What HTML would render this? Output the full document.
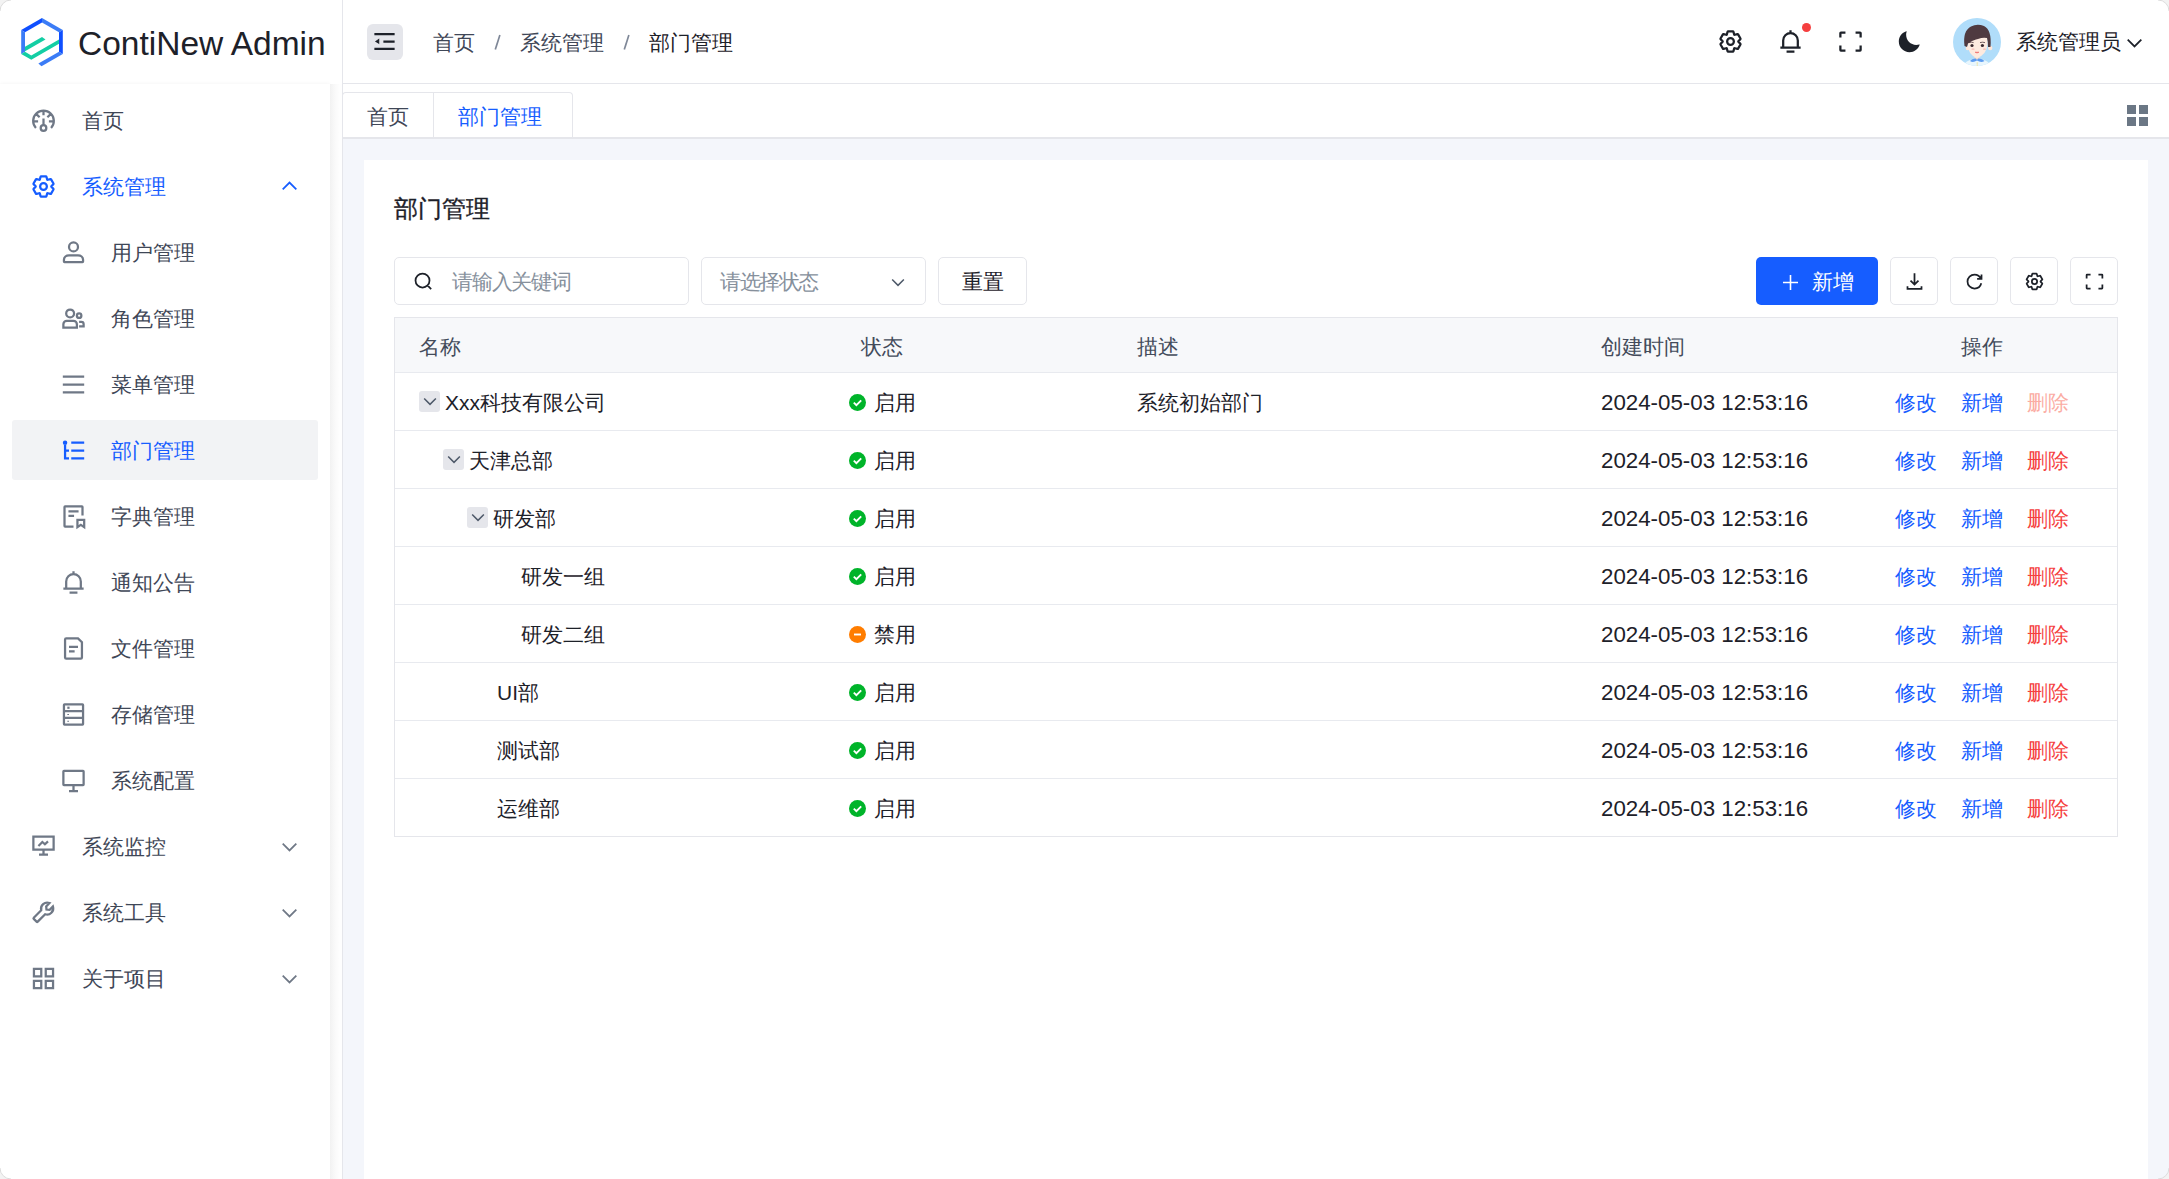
<!DOCTYPE html>
<html><head><meta charset="utf-8">
<style>
*{box-sizing:border-box;margin:0;padding:0}
html,body{width:2169px;height:1179px;overflow:hidden;background:#fff}
body{position:relative;font-family:"Liberation Sans",sans-serif;font-size:21px;color:#1d2129}
.a{position:absolute}
.t{position:absolute;white-space:nowrap;line-height:21px}
svg.i{position:absolute;fill:none;stroke:currentColor;stroke-width:4;stroke-linecap:butt;stroke-linejoin:miter}
/* header */
#hdr{left:0;top:0;width:2169px;height:84px;background:#fff}
#hline{left:342px;top:83px;width:1827px;height:1px;background:#e5e6eb}
#side{left:0;top:84px;width:330px;height:1095px;background:#fff;box-shadow:0 -1px 3px rgba(0,0,0,0.03)}
#shadow{left:330px;top:84px;width:12px;height:1095px;background:linear-gradient(90deg,#f2f2f2,#fafafa 45%,#fefefe 80%)}
#vline{left:342px;top:0;width:1px;height:1179px;background:#e5e6eb}
#main{left:343px;top:139px;width:1826px;height:1040px;background:#f4f6fb}
#tabs{left:343px;top:84px;width:1826px;height:55px;background:#fff;border-bottom:2px solid #e5e6eb}
#card{left:364px;top:160px;width:1784px;height:1019px;background:#fff}
.menu .t{color:#4e5969}
</style></head><body>
<div class="a" id="hdr"></div>
<div class="a" id="hline"></div>
<div class="a" id="side"></div>
<div class="a" id="shadow"></div>
<div class="a" id="vline"></div>
<div class="a" id="tabs"></div>
<div class="a" id="main"></div>
<div class="a" id="card"></div>

<!-- logo -->
<svg class="a" style="left:0;top:0" width="90" height="84" viewBox="0 0 90 84">
<polygon points="21.2,30.1 42,18.1 42,22.5 25,32.3" fill="#0f4fff"/>
<polygon points="42,18.1 62.8,30.1 59,32.3 42,22.5" fill="#3b7cf6"/>
<polygon points="62.8,30.1 62.8,53.9 59,51.7 59,32.3" fill="#0f4fff"/>
<polygon points="62.8,53.9 41.5,66.2 38.4,63.6 59,51.7" fill="#3b7cf6"/>
<polygon points="21.2,30.1 25,32.3 25,51.7 21.2,53.9" fill="#3b7cf6"/>
<polygon points="21.2,53.9 31.3,59.8 59,43.8 59,39.4 31.3,55.4 25,51.7" fill="#13cea4"/>
<polygon points="25,51.2 45.5,39.4 42,37.1 25,46.8" fill="#13cea4"/>
</svg>
<div class="t" id="logotxt" style="left:78px;top:24px;font-size:33.5px;line-height:40px;color:#1d2129">ContiNew Admin</div>
<!-- toggle -->
<div class="a" style="left:367px;top:24px;width:36px;height:36px;border-radius:6px;background:#e5e6eb"></div>
<svg class="i" style="left:371px;top:28px;color:#1d2129" width="27" height="27" viewBox="0 0 48 48" stroke-width="3.2" stroke-linecap="round"><path d="M42 11H6M42 24H22M42 37H6"/><path d="M13.66 26.912l-4.82-3.118 4.82-3.118v6.236Z" fill="currentColor" stroke-width="2"/></svg>
<!-- breadcrumb -->
<div class="t" style="left:433px;top:32px;color:#3f4757">首页</div>
<svg class="a" style="left:490px;top:30px" width="16" height="24"><path d="M5.3 19.6 L9.9 5" stroke="#7f8898" stroke-width="1.7" fill="none"/></svg>
<div class="t" style="left:520px;top:32px;color:#3f4757">系统管理</div>
<svg class="a" style="left:619px;top:30px" width="16" height="24"><path d="M5.3 19.6 L9.9 5" stroke="#7f8898" stroke-width="1.7" fill="none"/></svg>
<div class="t" style="left:649px;top:32px;color:#1d2129">部门管理</div>
<!-- right icons -->
<svg class="i" style="left:1717px;top:28px;color:#1d2129" width="27" height="27" viewBox="0 0 48 48"><path d="M18.797 6.732A1 1 0 0 1 19.76 6h8.48a1 1 0 0 1 .964.732l1.285 4.628a1 1 0 0 0 1.213.7l4.651-1.2a1 1 0 0 1 1.116.468l4.24 7.344a1 1 0 0 1-.153 1.2L38.193 23.3a1 1 0 0 0 0 1.402l3.364 3.427a1 1 0 0 1 .153 1.2l-4.24 7.344a1 1 0 0 1-1.116.468l-4.65-1.2a1 1 0 0 0-1.214.7l-1.285 4.628a1 1 0 0 1-.964.732h-8.48a1 1 0 0 1-.963-.732L17.51 36.64a1 1 0 0 0-1.213-.7l-4.65 1.2a1 1 0 0 1-1.116-.468l-4.24-7.344a1 1 0 0 1 .153-1.2L9.809 24.7a1 1 0 0 0 0-1.402l-3.364-3.427a1 1 0 0 1-.153-1.2l4.24-7.344a1 1 0 0 1 1.116-.468l4.65 1.2a1 1 0 0 0 1.213-.7l1.286-4.628Z"/><path d="M30 24a6 6 0 1 1-12 0 6 6 0 0 1 12 0Z"/></svg>
<svg class="i" style="left:1777px;top:28px;color:#1d2129" width="27" height="27" viewBox="0 0 48 48"><path d="M24 9c7.18 0 13 5.82 13 13v13H11V22c0-7.18 5.82-13 13-13Zm0 0V4M6 35h36m-25 7h14"/></svg>
<div class="a" style="left:1802px;top:23px;width:9px;height:9px;border-radius:50%;background:#f53f3f"></div>
<svg class="i" style="left:1837px;top:28px;color:#1d2129" width="27" height="27" viewBox="0 0 48 48"><path d="M42 17V9a1 1 0 0 0-1-1h-8M6 17V9a1 1 0 0 1 1-1h8m27 23v8a1 1 0 0 1-1 1h-8M6 31v8a1 1 0 0 0 1 1h8"/></svg>
<svg class="a" style="left:1896px;top:28px" width="27" height="27" viewBox="0 0 48 48"><path fill="#1d2129" d="M42.108 29.769c.124-.387-.258-.736-.645-.613A17.99 17.99 0 0 1 36 30c-9.941 0-18-8.059-18-18 0-1.904.296-3.74.844-5.463.123-.387-.226-.768-.613-.645C10.558 8.334 5 15.518 5 24c0 10.493 8.507 19 19 19 8.482 0 15.666-5.558 18.108-13.231Z"/></svg>
<!-- avatar -->
<svg class="a" style="left:1953px;top:18px" width="48" height="48" viewBox="0 0 48 48">
<defs><clipPath id="avc"><circle cx="24" cy="24" r="24"/></clipPath></defs>
<g clip-path="url(#avc)">
<rect width="48" height="48" fill="#b0ddfa"/>
<path d="M10 48 Q12 43 20 41 L28 41 Q36 43 38 48Z" fill="#e9f6fd"/>
<rect x="21.5" y="36" width="5" height="6" fill="#fde0cc"/>
<path d="M17 43 Q19 40 23 40.5 L24 42 L25 40.5 Q29 40 31.5 43 Q28 45 24 42.5 Q20 45 17 43Z" fill="#5d9cf0"/>
<circle cx="14.8" cy="30" r="2.2" fill="#fde8dc"/><circle cx="37.2" cy="30" r="2.2" fill="#fde8dc"/>
<path d="M14.8 18 L34.6 18 L34.6 26 Q33.5 37 24 40 Q14.8 37 14.8 26 Z" fill="#fdeadf"/>
<path d="M11.5 28 Q9.5 13 18 8.5 Q24 5.5 31 8 Q39 12 37.5 29 L35 29 Q35 23 34 20 Q30 19 25 21 L23 21.5 Q19 22.5 15 25.5 L14 29 Z" fill="#4f3a40"/>
<path d="M16 24.6 Q18.5 23.8 20.6 24.6M27 24.6 Q29.5 23.8 32 24.6" stroke="#4f3a40" stroke-width="0.8" fill="none"/>
<circle cx="19" cy="27.5" r="1.6" fill="#3a2a30"/><circle cx="29.4" cy="27.5" r="1.6" fill="#3a2a30"/>
<ellipse cx="20" cy="31.2" rx="1.6" ry="0.9" fill="#f8c6c0"/><ellipse cx="31.5" cy="31.2" rx="1.6" ry="0.9" fill="#f8c6c0"/>
<path d="M22 34.2 Q24 35.8 26 34.2 Z" fill="#ef6b6b" stroke="#ef6b6b" stroke-width="0.6"/>
<circle cx="24.2" cy="45" r="0.6" fill="#f2d34a"/><circle cx="24.2" cy="47" r="0.6" fill="#f2d34a"/>
</g></svg>
<div class="t" style="left:2016px;top:31px;color:#1d2129">系统管理员</div>
<svg class="i" style="left:2124px;top:32px;color:#1d2129" width="21" height="21" viewBox="0 0 48 48"><path d="M39.6 17.443 24.043 33 8.487 17.443"/></svg>

<div class="a" style="left:12px;top:420px;width:306px;height:60px;border-radius:3px;background:#f2f3f5"></div>
<svg class="i" style="left:30px;top:106.5px;color:#6f7886;" width="27" height="27" viewBox="0 0 48 48" stroke-width="2.5"><path d="M10.5 37.2A18.4 18.4 0 1 1 37.5 37.2M24 6.4v8.4M10.8 12.3l6.3 6M37.2 12.3l-6.3 6M5.8 25.5h8.6M42.2 25.5h-8.6M24 20.5V32"/><circle cx="24" cy="37.3" r="5"/></svg>
<div class="t" style="left:82px;top:109.5px;color:#3f4757">首页</div>
<svg class="i" style="left:30px;top:172.5px;color:#165dff;" width="27" height="27" viewBox="0 0 48 48" stroke-width="2.5"><path d="M18.797 6.732A1 1 0 0 1 19.76 6h8.48a1 1 0 0 1 .964.732l1.285 4.628a1 1 0 0 0 1.213.7l4.651-1.2a1 1 0 0 1 1.116.468l4.24 7.344a1 1 0 0 1-.153 1.2L38.193 23.3a1 1 0 0 0 0 1.402l3.364 3.427a1 1 0 0 1 .153 1.2l-4.24 7.344a1 1 0 0 1-1.116.468l-4.65-1.2a1 1 0 0 0-1.214.7l-1.285 4.628a1 1 0 0 1-.964.732h-8.48a1 1 0 0 1-.963-.732L17.51 36.64a1 1 0 0 0-1.213-.7l-4.65 1.2a1 1 0 0 1-1.116-.468l-4.24-7.344a1 1 0 0 1 .153-1.2L9.809 24.7a1 1 0 0 0 0-1.402l-3.364-3.427a1 1 0 0 1-.153-1.2l4.24-7.344a1 1 0 0 1 1.116-.468l4.65 1.2a1 1 0 0 0 1.213-.7l1.286-4.628Z"/><path d="M30 24a6 6 0 1 1-12 0 6 6 0 0 1 12 0Z"/></svg>
<div class="t" style="left:82px;top:175.5px;color:#165dff">系统管理</div>
<svg class="i" style="left:279px;top:175.5px;color:#165dff;" width="21" height="21" viewBox="0 0 48 48" stroke-width="2.5"><path d="M39.6 30.557 24.043 15 8.487 30.557"/></svg>
<svg class="i" style="left:60px;top:238.5px;color:#6f7886;" width="27" height="27" viewBox="0 0 48 48" stroke-width="2.5"><path d="M7 37c0-4.97 4.03-8 9-8h16c4.97 0 9 3.03 9 8v3a1 1 0 0 1-1 1H8a1 1 0 0 1-1-1v-3Z"/><circle cx="24" cy="14" r="8"/></svg>
<div class="t" style="left:111px;top:241.5px;color:#3f4757">用户管理</div>
<svg class="i" style="left:60px;top:304.5px;color:#6f7886;" width="27" height="27" viewBox="0 0 48 48" stroke-width="2.5"><circle cx="18" cy="15" r="7"/><circle cx="34" cy="19" r="4"/><path d="M6 34a6 6 0 0 1 6-6h12a6 6 0 0 1 6 6v6H6v-6ZM34 30h4a4 4 0 0 1 4 4v4h-8"/></svg>
<div class="t" style="left:111px;top:307.5px;color:#3f4757">角色管理</div>
<svg class="i" style="left:60px;top:370.5px;color:#6f7886;" width="27" height="27" viewBox="0 0 48 48" stroke-width="2.5"><path d="M5 10h38M5 24h38M5 38h38"/></svg>
<div class="t" style="left:111px;top:373.5px;color:#3f4757">菜单管理</div>
<svg class="i" style="left:60px;top:436.5px;color:#165dff;" width="27" height="27" viewBox="0 0 48 48" stroke-width="2.5"><path d="M20 10h23M20 24h23M20 38h23M9 12v28m0-28a2 2 0 1 0 0-4 2 2 0 0 0 0 4Zm0 26h7M9 24h7"/></svg>
<div class="t" style="left:111px;top:439.5px;color:#165dff">部门管理</div>
<svg class="i" style="left:60px;top:502.5px;color:#6f7886;" width="27" height="27" viewBox="0 0 48 48" stroke-width="2.5"><path d="M40 22V7a1 1 0 0 0-1-1H9a1 1 0 0 0-1 1v34a1 1 0 0 0 1 1h15M15 15h18M15 23h10"/><path d="M31 30h12v13l-6-4-6 4V30Z"/></svg>
<div class="t" style="left:111px;top:505.5px;color:#3f4757">字典管理</div>
<svg class="i" style="left:60px;top:568.5px;color:#6f7886;" width="27" height="27" viewBox="0 0 48 48" stroke-width="2.5"><path d="M24 9c7.18 0 13 5.82 13 13v13H11V22c0-7.18 5.82-13 13-13Zm0 0V4M6 35h36m-25 7h14"/></svg>
<div class="t" style="left:111px;top:571.5px;color:#3f4757">通知公告</div>
<svg class="i" style="left:60px;top:634.5px;color:#6f7886;" width="27" height="27" viewBox="0 0 48 48" stroke-width="2.5"><path d="M16 21h16m-16 8h10m11 13H11a2 2 0 0 1-2-2V8a2 2 0 0 1 2-2h21l7 7v27a2 2 0 0 1-2 2Z"/></svg>
<div class="t" style="left:111px;top:637.5px;color:#3f4757">文件管理</div>
<svg class="i" style="left:60px;top:700.5px;color:#6f7886;" width="27" height="27" viewBox="0 0 48 48" stroke-width="2.5"><path d="M7 18h34v12H7V18ZM40 6H8a1 1 0 0 0-1 1v11h34V7a1 1 0 0 0-1-1ZM7 30h34v11a1 1 0 0 1-1 1H8a1 1 0 0 1-1-1V30Z"/><path d="M13 10h4v4h-4z" fill="currentColor" stroke="none"/><path d="M13 23h3v2h-3zM13 35h3v2h-3z" fill="currentColor" stroke="none"/></svg>
<div class="t" style="left:111px;top:703.5px;color:#3f4757">存储管理</div>
<svg class="i" style="left:60px;top:766.5px;color:#6f7886;" width="27" height="27" viewBox="0 0 48 48" stroke-width="2.5"><path d="M24 32v11m-8 0h16M7 7h34a1 1 0 0 1 1 1v23a1 1 0 0 1-1 1H7a1 1 0 0 1-1-1V8a1 1 0 0 1 1-1Z"/></svg>
<div class="t" style="left:111px;top:769.5px;color:#3f4757">系统配置</div>
<svg class="i" style="left:30px;top:832.5px;color:#6f7886;" width="27" height="27" viewBox="0 0 48 48" stroke-width="2.5"><path d="M42 6.5H6v23h36V6.5Z"/><path d="M24 29.5v9M16 38.5h16"/><path d="m15 23 7-7 4.5 4 5.5-5"/></svg>
<div class="t" style="left:82px;top:835.5px;color:#3f4757">系统监控</div>
<svg class="i" style="left:279px;top:835.5px;color:#6f7886;" width="21" height="21" viewBox="0 0 48 48" stroke-width="2.5"><path d="M39.6 17.443 24.043 33 8.487 17.443"/></svg>
<svg class="i" style="left:30px;top:898.5px;color:#6f7886;" width="27" height="27" viewBox="0 0 48 48" stroke-width="2.5"><path d="M19.94 20.04 6.7 33.26a1.5 1.5 0 0 0 0 2.12l4.92 4.92a1.5 1.5 0 0 0 2.12 0L26.96 27.06a11 11 0 0 0 13.86-13.77l-5.9 5.9-5.66-.47-.47-5.66 5.9-5.9a11 11 0 0 0-14.75 12.88Z"/></svg>
<div class="t" style="left:82px;top:901.5px;color:#3f4757">系统工具</div>
<svg class="i" style="left:279px;top:901.5px;color:#6f7886;" width="21" height="21" viewBox="0 0 48 48" stroke-width="2.5"><path d="M39.6 17.443 24.043 33 8.487 17.443"/></svg>
<svg class="i" style="left:30px;top:964.5px;color:#6f7886;" width="27" height="27" viewBox="0 0 48 48" stroke-width="2.5"><path d="M7 7h13v13H7zM28 7h13v13H28zM7 28h13v13H7zM28 28h13v13H28z"/></svg>
<div class="t" style="left:82px;top:967.5px;color:#3f4757">关于项目</div>
<svg class="i" style="left:279px;top:967.5px;color:#6f7886;" width="21" height="21" viewBox="0 0 48 48" stroke-width="2.5"><path d="M39.6 17.443 24.043 33 8.487 17.443"/></svg>
<div class="a" style="left:342px;top:92px;width:231px;height:47px;border:1px solid #e5e6eb;border-bottom:none;border-radius:4px 4px 0 0;background:#fff"></div>
<div class="a" style="left:433px;top:93px;width:1px;height:44px;background:#e5e6eb"></div>
<div class="a" style="left:343px;top:137px;width:1826px;height:2px;background:#e5e6eb"></div>
<div class="t" style="left:367px;top:106px;color:#3f4757">首页</div>
<div class="t" style="left:458px;top:106px;color:#165dff">部门管理</div>
<div class="a" style="left:2127px;top:105px;width:9px;height:9px;background:#6b7785"></div>
<div class="a" style="left:2139px;top:105px;width:9px;height:9px;background:#6b7785"></div>
<div class="a" style="left:2127px;top:117px;width:9px;height:9px;background:#6b7785"></div>
<div class="a" style="left:2139px;top:117px;width:9px;height:9px;background:#6b7785"></div>
<div class="t" style="left:394px;top:197px;font-size:24px;line-height:24px;color:#1d2129;-webkit-text-stroke:0.35px #1d2129">部门管理</div>
<div class="a" style="left:394px;top:257px;width:295px;height:48px;border:1px solid #e5e6eb;border-radius:5px;background:#fff"></div>
<svg class="i" style="left:413px;top:271px;color:#1d2129" width="21" height="21" viewBox="0 0 48 48" stroke-width="3.6"><path d="M33.072 33.071c6.248-6.248 6.248-16.379 0-22.627-6.249-6.249-16.38-6.249-22.628 0-6.248 6.248-6.248 16.379 0 22.627 6.248 6.248 16.38 6.248 22.628 0Zm0 0 8.485 8.485"/></svg>
<div class="t" style="left:452px;top:271px;color:#86909c;letter-spacing:-1.2px">请输入关键词</div>
<div class="a" style="left:701px;top:257px;width:225px;height:48px;border:1px solid #e5e6eb;border-radius:5px;background:#fff"></div>
<div class="t" style="left:720px;top:271px;color:#86909c;letter-spacing:-1.5px">请选择状态</div>
<svg class="i" style="left:889px;top:273px;color:#4e5969;" width="18" height="18" viewBox="0 0 48 48" stroke-width="4"><path d="M39.6 17.443 24.043 33 8.487 17.443"/></svg>
<div class="a" style="left:938px;top:257px;width:89px;height:48px;border:1px solid #e5e6eb;border-radius:5px;background:#fff"></div>
<div class="t" style="left:962px;top:271px;color:#1d2129">重置</div>
<div class="a" style="left:1756px;top:257px;width:122px;height:48px;border-radius:5px;background:#165dff"></div>
<svg class="i" style="left:1781px;top:273px;color:#fff" width="19" height="19" viewBox="0 0 48 48" stroke-width="4.5"><path d="M5 24h38M24 5v38"/></svg>
<div class="t" style="left:1812px;top:271px;color:#fff">新增</div>
<div class="a" style="left:1890px;top:257px;width:48px;height:48px;border:1px solid #e5e6eb;border-radius:5px;background:#fff"></div>
<svg class="i" style="left:1903.5px;top:270.5px;color:#1d2129" width="21" height="21" viewBox="0 0 48 48" stroke-width="4"><path d="m33.072 22.071-9.07 9.071-9.072-9.07M24 5v26m16 4v6H8v-6"/></svg>
<div class="a" style="left:1950px;top:257px;width:48px;height:48px;border:1px solid #e5e6eb;border-radius:5px;background:#fff"></div>
<svg class="i" style="left:1963.5px;top:270.5px;color:#1d2129" width="21" height="21" viewBox="0 0 48 48" stroke-width="4"><path d="M38.837 18C36.463 12.136 30.715 8 24 8 15.163 8 8 15.163 8 24s7.163 16 16 16c7.455 0 13.72-5.1 15.496-12M40 8v10H30"/></svg>
<div class="a" style="left:2010px;top:257px;width:48px;height:48px;border:1px solid #e5e6eb;border-radius:5px;background:#fff"></div>
<svg class="i" style="left:2023.5px;top:270.5px;color:#1d2129" width="21" height="21" viewBox="0 0 48 48" stroke-width="4"><path d="M18.797 6.732A1 1 0 0 1 19.76 6h8.48a1 1 0 0 1 .964.732l1.285 4.628a1 1 0 0 0 1.213.7l4.651-1.2a1 1 0 0 1 1.116.468l4.24 7.344a1 1 0 0 1-.153 1.2L38.193 23.3a1 1 0 0 0 0 1.402l3.364 3.427a1 1 0 0 1 .153 1.2l-4.24 7.344a1 1 0 0 1-1.116.468l-4.65-1.2a1 1 0 0 0-1.214.7l-1.285 4.628a1 1 0 0 1-.964.732h-8.48a1 1 0 0 1-.963-.732L17.51 36.64a1 1 0 0 0-1.213-.7l-4.65 1.2a1 1 0 0 1-1.116-.468l-4.24-7.344a1 1 0 0 1 .153-1.2L9.809 24.7a1 1 0 0 0 0-1.402l-3.364-3.427a1 1 0 0 1-.153-1.2l4.24-7.344a1 1 0 0 1 1.116-.468l4.65 1.2a1 1 0 0 0 1.213-.7l1.286-4.628Z"/><path d="M30 24a6 6 0 1 1-12 0 6 6 0 0 1 12 0Z"/></svg>
<div class="a" style="left:2070px;top:257px;width:48px;height:48px;border:1px solid #e5e6eb;border-radius:5px;background:#fff"></div>
<svg class="i" style="left:2083.5px;top:270.5px;color:#1d2129" width="21" height="21" viewBox="0 0 48 48" stroke-width="4"><path d="M42 17V9a1 1 0 0 0-1-1h-8M6 17V9a1 1 0 0 1 1-1h8m27 23v8a1 1 0 0 1-1 1h-8M6 31v8a1 1 0 0 0 1 1h8"/></svg>
<div class="a" style="left:394px;top:317px;width:1724px;height:520px;border:1px solid #e5e6eb;background:#fff"></div>
<div class="a" style="left:395px;top:318px;width:1722px;height:54px;background:#f7f8fa"></div>
<div class="a" style="left:395px;top:372px;width:1722px;height:1px;background:#e8eaef"></div>
<div class="a" style="left:395px;top:430px;width:1722px;height:1px;background:#e8eaef"></div>
<div class="a" style="left:395px;top:488px;width:1722px;height:1px;background:#e8eaef"></div>
<div class="a" style="left:395px;top:546px;width:1722px;height:1px;background:#e8eaef"></div>
<div class="a" style="left:395px;top:604px;width:1722px;height:1px;background:#e8eaef"></div>
<div class="a" style="left:395px;top:662px;width:1722px;height:1px;background:#e8eaef"></div>
<div class="a" style="left:395px;top:720px;width:1722px;height:1px;background:#e8eaef"></div>
<div class="a" style="left:395px;top:778px;width:1722px;height:1px;background:#e8eaef"></div>
<div class="t" style="left:419px;top:336px;color:#434b5a">名称</div>
<div class="t" style="left:861px;top:336px;color:#434b5a">状态</div>
<div class="t" style="left:1137px;top:336px;color:#434b5a">描述</div>
<div class="t" style="left:1601px;top:336px;color:#434b5a">创建时间</div>
<div class="t" style="left:1961px;top:336px;color:#434b5a">操作</div>
<div class="a" style="left:419px;top:391px;width:21px;height:21px;border-radius:3px;background:#e5e6eb"></div>
<svg class="i" style="left:420.5px;top:391.5px;color:#4e5969;" width="18" height="18" viewBox="0 0 48 48" stroke-width="3.6"><path d="M39.6 17.443 24.043 33 8.487 17.443"/></svg>
<div class="t" style="left:445px;top:392px;color:#1d2129">Xxx科技有限公司</div>
<svg class="a" style="left:849px;top:394px" width="17" height="17" viewBox="0 0 17 17"><circle cx="8.5" cy="8.5" r="8.5" fill="#00b42a"/><path d="M4.8 8.6l2.6 2.5 4.8-4.8" stroke="#fff" stroke-width="1.9" fill="none"/></svg>
<div class="t" style="left:874px;top:392px;color:#1d2129">启用</div>
<div class="t" style="left:1137px;top:392px;color:#1d2129">系统初始部门</div>
<div class="t" style="left:1601px;top:392px;font-size:22.3px;color:#1d2129">2024-05-03 12:53:16</div>
<div class="t" style="left:1895px;top:392px;color:#165dff">修改</div>
<div class="t" style="left:1961px;top:392px;color:#165dff">新增</div>
<div class="t" style="left:2027px;top:392px;color:#fbaca3">删除</div>
<div class="a" style="left:443px;top:449px;width:21px;height:21px;border-radius:3px;background:#e5e6eb"></div>
<svg class="i" style="left:444.5px;top:449.5px;color:#4e5969;" width="18" height="18" viewBox="0 0 48 48" stroke-width="3.6"><path d="M39.6 17.443 24.043 33 8.487 17.443"/></svg>
<div class="t" style="left:469px;top:450px;color:#1d2129">天津总部</div>
<svg class="a" style="left:849px;top:452px" width="17" height="17" viewBox="0 0 17 17"><circle cx="8.5" cy="8.5" r="8.5" fill="#00b42a"/><path d="M4.8 8.6l2.6 2.5 4.8-4.8" stroke="#fff" stroke-width="1.9" fill="none"/></svg>
<div class="t" style="left:874px;top:450px;color:#1d2129">启用</div>
<div class="t" style="left:1601px;top:450px;font-size:22.3px;color:#1d2129">2024-05-03 12:53:16</div>
<div class="t" style="left:1895px;top:450px;color:#165dff">修改</div>
<div class="t" style="left:1961px;top:450px;color:#165dff">新增</div>
<div class="t" style="left:2027px;top:450px;color:#f53f3f">删除</div>
<div class="a" style="left:467px;top:507px;width:21px;height:21px;border-radius:3px;background:#e5e6eb"></div>
<svg class="i" style="left:468.5px;top:507.5px;color:#4e5969;" width="18" height="18" viewBox="0 0 48 48" stroke-width="3.6"><path d="M39.6 17.443 24.043 33 8.487 17.443"/></svg>
<div class="t" style="left:493px;top:508px;color:#1d2129">研发部</div>
<svg class="a" style="left:849px;top:510px" width="17" height="17" viewBox="0 0 17 17"><circle cx="8.5" cy="8.5" r="8.5" fill="#00b42a"/><path d="M4.8 8.6l2.6 2.5 4.8-4.8" stroke="#fff" stroke-width="1.9" fill="none"/></svg>
<div class="t" style="left:874px;top:508px;color:#1d2129">启用</div>
<div class="t" style="left:1601px;top:508px;font-size:22.3px;color:#1d2129">2024-05-03 12:53:16</div>
<div class="t" style="left:1895px;top:508px;color:#165dff">修改</div>
<div class="t" style="left:1961px;top:508px;color:#165dff">新增</div>
<div class="t" style="left:2027px;top:508px;color:#f53f3f">删除</div>
<div class="t" style="left:521px;top:566px;color:#1d2129">研发一组</div>
<svg class="a" style="left:849px;top:568px" width="17" height="17" viewBox="0 0 17 17"><circle cx="8.5" cy="8.5" r="8.5" fill="#00b42a"/><path d="M4.8 8.6l2.6 2.5 4.8-4.8" stroke="#fff" stroke-width="1.9" fill="none"/></svg>
<div class="t" style="left:874px;top:566px;color:#1d2129">启用</div>
<div class="t" style="left:1601px;top:566px;font-size:22.3px;color:#1d2129">2024-05-03 12:53:16</div>
<div class="t" style="left:1895px;top:566px;color:#165dff">修改</div>
<div class="t" style="left:1961px;top:566px;color:#165dff">新增</div>
<div class="t" style="left:2027px;top:566px;color:#f53f3f">删除</div>
<div class="t" style="left:521px;top:624px;color:#1d2129">研发二组</div>
<svg class="a" style="left:849px;top:626px" width="17" height="17" viewBox="0 0 17 17"><circle cx="8.5" cy="8.5" r="8.5" fill="#ff7d00"/><path d="M5 8.5h7" stroke="#fff" stroke-width="1.9"/></svg>
<div class="t" style="left:874px;top:624px;color:#1d2129">禁用</div>
<div class="t" style="left:1601px;top:624px;font-size:22.3px;color:#1d2129">2024-05-03 12:53:16</div>
<div class="t" style="left:1895px;top:624px;color:#165dff">修改</div>
<div class="t" style="left:1961px;top:624px;color:#165dff">新增</div>
<div class="t" style="left:2027px;top:624px;color:#f53f3f">删除</div>
<div class="t" style="left:497px;top:682px;color:#1d2129">UI部</div>
<svg class="a" style="left:849px;top:684px" width="17" height="17" viewBox="0 0 17 17"><circle cx="8.5" cy="8.5" r="8.5" fill="#00b42a"/><path d="M4.8 8.6l2.6 2.5 4.8-4.8" stroke="#fff" stroke-width="1.9" fill="none"/></svg>
<div class="t" style="left:874px;top:682px;color:#1d2129">启用</div>
<div class="t" style="left:1601px;top:682px;font-size:22.3px;color:#1d2129">2024-05-03 12:53:16</div>
<div class="t" style="left:1895px;top:682px;color:#165dff">修改</div>
<div class="t" style="left:1961px;top:682px;color:#165dff">新增</div>
<div class="t" style="left:2027px;top:682px;color:#f53f3f">删除</div>
<div class="t" style="left:497px;top:740px;color:#1d2129">测试部</div>
<svg class="a" style="left:849px;top:742px" width="17" height="17" viewBox="0 0 17 17"><circle cx="8.5" cy="8.5" r="8.5" fill="#00b42a"/><path d="M4.8 8.6l2.6 2.5 4.8-4.8" stroke="#fff" stroke-width="1.9" fill="none"/></svg>
<div class="t" style="left:874px;top:740px;color:#1d2129">启用</div>
<div class="t" style="left:1601px;top:740px;font-size:22.3px;color:#1d2129">2024-05-03 12:53:16</div>
<div class="t" style="left:1895px;top:740px;color:#165dff">修改</div>
<div class="t" style="left:1961px;top:740px;color:#165dff">新增</div>
<div class="t" style="left:2027px;top:740px;color:#f53f3f">删除</div>
<div class="t" style="left:497px;top:798px;color:#1d2129">运维部</div>
<svg class="a" style="left:849px;top:800px" width="17" height="17" viewBox="0 0 17 17"><circle cx="8.5" cy="8.5" r="8.5" fill="#00b42a"/><path d="M4.8 8.6l2.6 2.5 4.8-4.8" stroke="#fff" stroke-width="1.9" fill="none"/></svg>
<div class="t" style="left:874px;top:798px;color:#1d2129">启用</div>
<div class="t" style="left:1601px;top:798px;font-size:22.3px;color:#1d2129">2024-05-03 12:53:16</div>
<div class="t" style="left:1895px;top:798px;color:#165dff">修改</div>
<div class="t" style="left:1961px;top:798px;color:#165dff">新增</div>
<div class="t" style="left:2027px;top:798px;color:#f53f3f">删除</div>
<svg class="a" style="left:0px;top:0px" width="11" height="11" viewBox="0 0 11 11"><path d="M0 0H11A11 11 0 0 0 0 11Z" fill="#f3f3f3"/><path d="M11 0A11 11 0 0 0 0 11" fill="none" stroke="#dcdcdc" stroke-width="1"/></svg>
<svg class="a" style="left:2158px;top:0px" width="11" height="11" viewBox="0 0 11 11"><path d="M0 0H11V11A11 11 0 0 0 0 0Z" fill="#f3f3f3"/><path d="M0 0A11 11 0 0 1 11 11" fill="none" stroke="#dcdcdc" stroke-width="1"/></svg>
<svg class="a" style="left:0px;top:1168px" width="11" height="11" viewBox="0 0 11 11"><path d="M0 0A11 11 0 0 0 11 11H0Z" fill="#f3f3f3"/><path d="M0 0A11 11 0 0 0 11 11" fill="none" stroke="#dcdcdc" stroke-width="1"/></svg>
<svg class="a" style="left:2158px;top:1168px" width="11" height="11" viewBox="0 0 11 11"><path d="M11 0A11 11 0 0 1 0 11H11Z" fill="#f3f3f3"/><path d="M11 0A11 11 0 0 1 0 11" fill="none" stroke="#dcdcdc" stroke-width="1"/></svg>
</body></html>
